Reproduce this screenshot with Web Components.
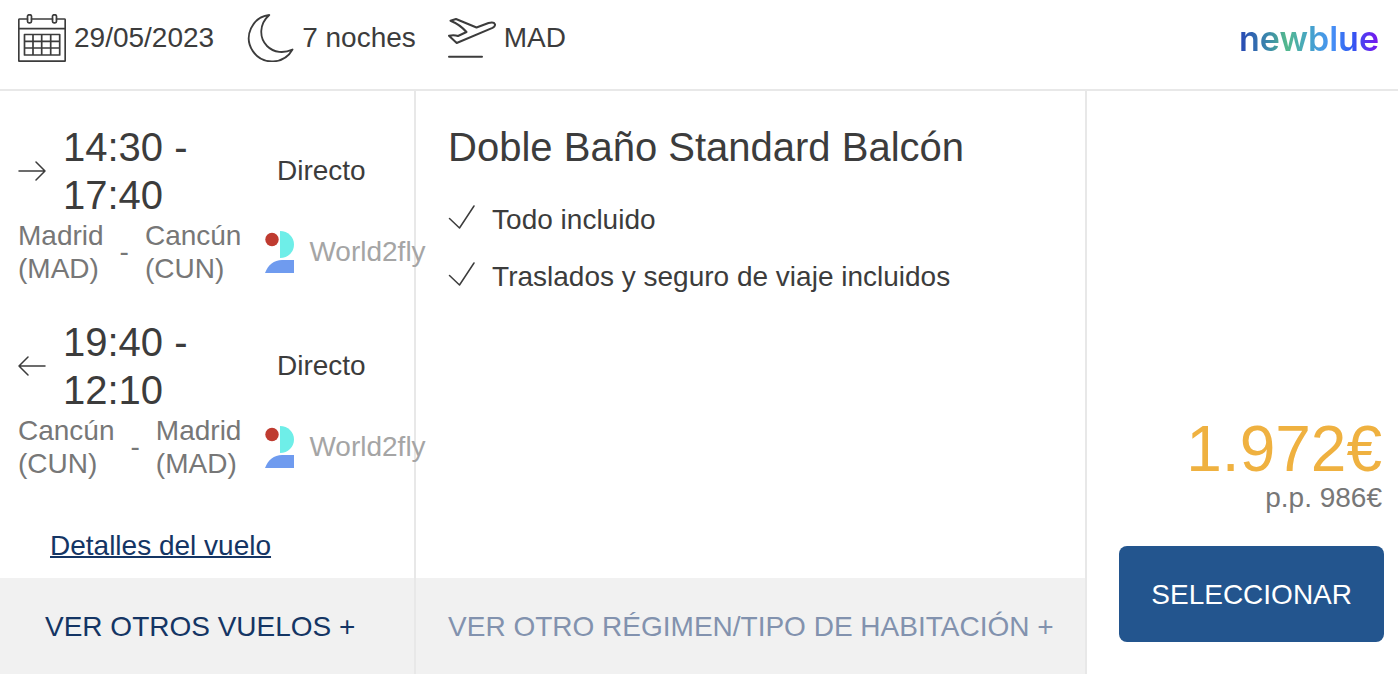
<!DOCTYPE html>
<html lang="es">
<head>
<meta charset="utf-8">
<title>Oferta de viaje</title>
<style>
  body { margin: 0; background: #fff; color: #3c3c3c; font: 28px/33px "Liberation Sans", Arial, sans-serif; }
</style>
</head>
<body>
<trip-offer></trip-offer>

<template id="t-fact">
  <style>
    :host { display: flex; align-items: center; gap: 8px; white-space: nowrap; line-height: 32px; }
  </style>
  <slot name="icon"></slot><span><slot></slot></span>
</template>

<template id="t-brand">
  <style>
    :host { display: block; }
    a {
      display: block; font: 600 34px/50px Inter, sans-serif; text-decoration: none; color: transparent;
      margin-bottom: -2px;
      background: linear-gradient(90deg, #2746b4 0%, #3a86ac 20%, #54b98d 34%, #45a3c8 50%, #4893f5 66%, #2f5cf2 80%, #7a12ee 100%);
      -webkit-background-clip: text; background-clip: text;
    }
  </style>
  <a href="#"><slot></slot></a>
</template>

<template id="t-leg">
  <style>
    :host { display: block; }
    .top { display: flex; align-items: center; line-height: 32px; }
    .times { width: 160px; margin: 0 54px 0 17px; font-size: 40px; line-height: 48px; }
    .route { display: flex; align-items: center; white-space: nowrap; color: #777; }
    .dash { margin: 0 16px; line-height: 32px; }
    .airline { display: flex; align-items: center; gap: 15px; margin-left: 24px; color: #a5a5a5; line-height: 32px; }
    svg { display: block; flex: none; }
    ::slotted(*) { display: block; }
  </style>
  <div class="top">
    <slot name="arrow"></slot>
    <div class="times"><slot name="depart"></slot><slot name="arrive"></slot></div>
    <slot name="stops"></slot>
  </div>
  <div class="route">
    <slot name="from"></slot><span class="dash">-</span><slot name="to"></slot>
    <div class="airline">
      <svg width="29" height="42" viewBox="0 0 29 42" aria-hidden="true">
        <circle cx="7" cy="8.5" r="6.7" fill="#bf3b30"/>
        <path d="M15 0c8 0 14 6 14 13.500S23 27 15 27z" fill="#6eeee8"/>
        <path d="M0 42C3 34 9 29 17 29h12v13z" fill="#6f9bef"/>
      </svg>
      <slot name="airline"></slot>
    </div>
  </div>
</template>

<template id="t-icon">
  <style>
    :host { display: block; flex: none; }
    svg { display: block; fill: none; stroke: #3c3c3c; stroke-linejoin: round; stroke-linecap: round; }
  </style>
</template>

<template id="t-feature">
  <style>
    :host { display: flex; align-items: center; gap: 16px; }
  </style>
  <trip-icon name="check"></trip-icon><span><slot></slot></span>
</template>

<template id="t-more">
  <style>
    :host { display: block; background: #f1f1f1; color: #143564; }
    :host([muted]) { color: #8292ae; }
    button {
      width: 100%; border: 0; margin: 0; padding: 32px 32px 31px; background: none; color: inherit;
      font: inherit; text-align: left; white-space: nowrap; cursor: pointer;
    }
    :host([inset]) button { padding-left: 45px; }
  </style>
  <button type="button"><slot></slot></button>
</template>

<template id="t-price">
  <style>
    :host { display: flex; flex-direction: column; justify-content: flex-end; align-items: flex-end; padding: 32px 14px 32px 32px; }
    .total, .each { padding-right: 2px; }
    .total { font-size: 64px; line-height: 64px; color: #efb140; }
    .each { color: #777; margin-bottom: 32px; }
    button {
      border: 0; border-radius: 8px; padding: 32px 32px 31px; background: #23558e; color: #fff;
      font: inherit; white-space: nowrap; cursor: pointer;
    }
  </style>
  <div class="total"><slot name="total"></slot></div>
  <div class="each"><slot name="each"></slot></div>
  <button type="button"><slot name="action"></slot></button>
</template>

<template id="t-offer">
  <style>
    :host { display: block; }
    header { display: flex; align-items: center; gap: 32px; padding: 14px 19px 27px 18px; border-bottom: 2px solid #e8e8e8; }
    trip-brand { margin-left: auto; }
    main { display: grid; grid-template-columns: minmax(0, 416fr) minmax(0, 671fr) auto; }
    section { display: flex; flex-direction: column; border-right: 2px solid #e8e8e8; }
    .flights { display: flex; flex-direction: column; gap: 33px; padding: 32px 0 49px 18px; }
    .details { align-self: flex-start; margin: 0 0 16px 50px; color: #143564; text-decoration-thickness: 2px; }
    .room { flex: 1; padding: 32px 32px 24px; }
    h2 { margin: 0 0 32px; font-size: 40px; line-height: 48px; font-weight: 400; }
    .features { display: grid; gap: 24px; }
  </style>
  <header>
    <trip-fact><trip-icon slot="icon" name="calendar"></trip-icon>29/05/2023</trip-fact>
    <trip-fact><trip-icon slot="icon" name="moon"></trip-icon>7 noches</trip-fact>
    <trip-fact><trip-icon slot="icon" name="plane"></trip-icon>MAD</trip-fact>
    <trip-brand>newblue</trip-brand>
  </header>
  <main>
    <section>
      <div class="flights">
        <flight-leg>
          <trip-icon slot="arrow" name="right"></trip-icon>
          <span slot="depart">14:30 -</span><span slot="arrive">17:40</span>
          <span slot="stops">Directo</span>
          <span slot="from">Madrid<br>(MAD)</span><span slot="to">Cancún<br>(CUN)</span>
          <span slot="airline">World2fly</span>
        </flight-leg>
        <flight-leg>
          <trip-icon slot="arrow" name="left"></trip-icon>
          <span slot="depart">19:40 -</span><span slot="arrive">12:10</span>
          <span slot="stops">Directo</span>
          <span slot="from">Cancún<br>(CUN)</span><span slot="to">Madrid<br>(MAD)</span>
          <span slot="airline">World2fly</span>
        </flight-leg>
      </div>
      <a class="details" href="#">Detalles del vuelo</a>
      <more-button inset>VER OTROS VUELOS +</more-button>
    </section>
    <section>
      <div class="room">
        <h2>Doble Baño Standard Balcón</h2>
        <div class="features">
          <room-feature>Todo incluido</room-feature>
          <room-feature>Traslados y seguro de viaje incluidos</room-feature>
        </div>
      </div>
      <more-button muted>VER OTRO RÉGIMEN/TIPO DE HABITACIÓN +</more-button>
    </section>
    <price-box>
      <span slot="total">1.972€</span>
      <span slot="each">p.p. 986€</span>
      <span slot="action">SELECCIONAR</span>
    </price-box>
  </main>
</template>

<script>
  const ICONS = {
    calendar: [48, 48, 1.7, '<path d="M9.500 5H1.500Q.8 5 .8 6V46.500Q.8 47.200 1.500 47.200H46.500Q47.200 47.200 47.200 46.500V6Q47.200 5 46.500 5H38.500M13.500 5H34.500M1 14.700H47"/><rect x="9.500" y=".8" width="4" height="8" rx="1.500"/><rect x="34.500" y=".8" width="4" height="8" rx="1.500"/><path d="M6.500 20.500H41.700V41H6.500zM15 20.500V41M23.700 20.500V41M32.700 20.500V41M6.500 27.300H41.700M6.500 34H41.700"/>'],
    moon: [48, 48, 1.8, '<path d="M23.300 1A23.300 23.300 0 1 0 46.500 35.500C38 39.500 28 39 21 32C13 24 13 10 23.300 1z"/>'],
    plane: [48, 48, 2, '<path d="M2.500 6.700L8 5L28.500 13.500L40.500 9Q46 7.500 47 10.300Q47.300 12.300 44.500 13.800L8.700 29L1 21.700Q6 20.500 10 22L18.500 18Q12 10.500 2.500 6.700zM1 42.700H34"/>'],
    right: [28, 20, 1.5, '<path d="M1 10H27M18 1L27 10L18 19"/>'],
    left: [28, 20, 1.5, '<path d="M27 10H1M10 1L1 10L10 19"/>'],
    check: [28, 32, 1.5, '<path d="M1.500 14.500L11.500 24L26 2"/>']
  };

  function define(name, templateId, setup) {
    customElements.define(name, class extends HTMLElement {
      constructor() {
        super();
        const root = this.attachShadow({ mode: "open" });
        root.append(document.getElementById(templateId).content.cloneNode(true));
      }
      connectedCallback() { if (setup) setup(this); }
    });
  }

  define("trip-icon", "t-icon", host => {
    const [w, h, stroke, body] = ICONS[host.getAttribute("name")];
    const box = document.createElement("div");
    box.innerHTML = `<svg width="${w}" height="${h}" viewBox="0 0 ${w} ${h}" stroke-width="${stroke}" aria-hidden="true">${body}</svg>`;
    host.shadowRoot.append(box.firstChild);
  });
  define("trip-fact", "t-fact");
  define("trip-brand", "t-brand");
  define("flight-leg", "t-leg");
  define("room-feature", "t-feature");
  define("more-button", "t-more");
  define("price-box", "t-price");
  define("trip-offer", "t-offer");
</script>
</body>
</html>
